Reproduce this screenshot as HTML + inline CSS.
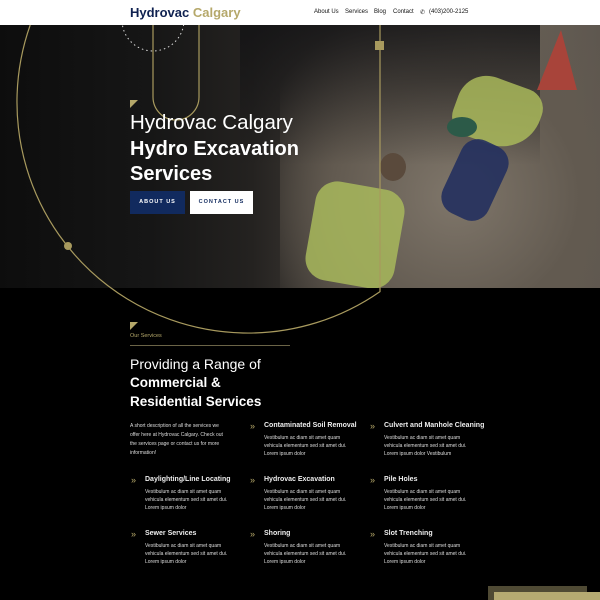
<!DOCTYPE html>
<html><head><meta charset="utf-8"><style>
*{margin:0;padding:0;box-sizing:border-box}
body{width:600px;height:600px;overflow:hidden;background:#000;font-family:"Liberation Sans",sans-serif;position:relative}
.nav{position:absolute;top:0;left:0;width:600px;height:25px;background:#fff;z-index:5}
.logo{position:absolute;left:130px;top:5px;font-size:13px;font-weight:bold;color:#0f2150}
.logo span{color:#b5a86a}
.menu{position:absolute;top:9px;font-size:6px;color:#111}
.hero{position:absolute;top:25px;left:0;width:600px;height:263px;overflow:hidden;
background:linear-gradient(90deg,#0d0d0d 0%,#161616 25%,#242220 42%,#4a443e 60%,#6a6258 80%,#5e574f 100%)}
.abs{position:absolute}
.t{color:#fff;position:absolute;left:130px;z-index:3}
.btn{position:absolute;height:23px;font-size:5.5px;font-weight:bold;letter-spacing:1px;text-align:center;line-height:23px;z-index:3}
.h{position:absolute;font-size:7px;font-weight:bold;color:#eee}
.p{position:absolute;font-size:5px;line-height:8px;color:#ddd;width:90px}
.ic{position:absolute;font-size:9px;color:#b5a86a;line-height:8px}
</style></head><body>
<div class="nav">
<div class="logo">Hydrovac <span>Calgary</span></div>
<div class="menu" style="left:314px">About Us</div>
<div class="menu" style="left:345px">Services</div>
<div class="menu" style="left:374px">Blog</div>
<div class="menu" style="left:393px">Contact</div>
<div class="menu" style="left:420px">&#9990;</div>
<div class="menu" style="left:429px">(403)200-2125</div>
</div>
<div class="hero">
<div class="abs" style="left:280px;top:0;width:320px;height:263px;background:radial-gradient(ellipse at 55% 65%,#7f766a 0%,#625a50 50%,rgba(50,46,42,0) 85%)"></div>
<div class="abs" style="left:240px;top:0;width:300px;height:140px;background:linear-gradient(180deg,rgba(18,18,20,.8),rgba(18,18,20,0))"></div>
<div class="abs" style="left:455px;top:55px;width:85px;height:65px;background:#a9b85a;border-radius:30px 20px 40px 20px;transform:rotate(20deg);opacity:.85"></div>
<div class="abs" style="left:447px;top:92px;width:30px;height:20px;background:#2c5a48;border-radius:50%"></div>
<div class="abs" style="left:450px;top:115px;width:50px;height:80px;background:#23305e;border-radius:18px;transform:rotate(25deg);opacity:.9"></div>
<div class="abs" style="left:310px;top:160px;width:90px;height:100px;background:#a8b85c;border-radius:22px;transform:rotate(10deg);opacity:.85"></div>
<div class="abs" style="left:380px;top:128px;width:26px;height:28px;background:#5a4a3c;border-radius:50%"></div>
<div class="abs" style="left:537px;top:5px;width:40px;height:60px;background:#a8443a;clip-path:polygon(60% 0,100% 100%,0 100%)"></div>
<div class="t" style="top:86px;font-size:20.5px;font-weight:300">Hydrovac Calgary</div>
<div class="t" style="top:112px;font-size:20px;font-weight:bold;line-height:25px">Hydro Excavation<br>Services</div>
<div class="btn" style="top:166px;left:130px;width:55px;background:#112a5e;color:#fff">ABOUT US</div>
<div class="btn" style="top:166px;left:190px;width:63px;background:#fff;color:#112a5e">CONTACT US</div>
</div>
<svg class="abs" style="left:0;top:25px;z-index:2" width="600" height="320">
<g fill="none" stroke="#a89a5e" stroke-width="1.2">
<path d="M380,0 V266.6 A231,231 0 0 1 30.2,0"/>
<path d="M153,0 V72 a23,23 0 0 0 46,0 V0"/>
<circle cx="153" cy="-5" r="31" stroke="#ddd" stroke-dasharray="1.5,3" stroke-width="1"/>
</g>
<circle cx="68" cy="221" r="4" fill="#a89a5e"/>
<rect x="375" y="16" width="9" height="9" fill="#a89a5e"/>
<polygon points="130,75 138,75 130,83" fill="#b5a86a"/>
</svg>
<svg class="abs" style="left:130px;top:322px" width="10" height="10"><polygon points="0,0 8,0 0,8" fill="#b5a86a"/></svg>
<div class="abs" style="left:130px;top:333px;font-size:5.5px;color:#b5a86a">Our Services</div>
<div class="abs" style="left:130px;top:345px;width:160px;height:1px;background:#6b6447"></div>
<div class="abs" style="left:130px;top:356px;font-size:14px;font-weight:300;color:#fff">Providing a Range of</div>
<div class="abs" style="left:130px;top:373px;font-size:13.5px;font-weight:bold;color:#fff;line-height:19px">Commercial &amp;<br>Residential Services</div>
<div class="p" style="left:130px;top:422px;width:100px;line-height:9px">A short description of all the services we offer here at Hydrovac Calgary. Check out the services page or contact us for more information!</div>

<div class="ic" style="left:250px;top:422px">&raquo;</div><div class="h" style="left:264px;top:422px">Contaminated Soil Removal</div><div class="p" style="left:264px;top:434px">Vestibulum ac diam sit amet quam vehicula elementum sed sit amet dui. Lorem ipsum dolor</div>
<div class="ic" style="left:370px;top:422px">&raquo;</div><div class="h" style="left:384px;top:422px">Culvert and Manhole Cleaning</div><div class="p" style="left:384px;top:434px">Vestibulum ac diam sit amet quam vehicula elementum sed sit amet dui. Lorem ipsum dolor Vestibulum</div>

<div class="ic" style="left:131px;top:476px">&raquo;</div><div class="h" style="left:145px;top:476px">Daylighting/Line Locating</div><div class="p" style="left:145px;top:488px">Vestibulum ac diam sit amet quam vehicula elementum sed sit amet dui. Lorem ipsum dolor</div>
<div class="ic" style="left:250px;top:476px">&raquo;</div><div class="h" style="left:264px;top:476px">Hydrovac Excavation</div><div class="p" style="left:264px;top:488px">Vestibulum ac diam sit amet quam vehicula elementum sed sit amet dui. Lorem ipsum dolor</div>
<div class="ic" style="left:370px;top:476px">&raquo;</div><div class="h" style="left:384px;top:476px">Pile Holes</div><div class="p" style="left:384px;top:488px">Vestibulum ac diam sit amet quam vehicula elementum sed sit amet dui. Lorem ipsum dolor</div>

<div class="ic" style="left:131px;top:530px">&raquo;</div><div class="h" style="left:145px;top:530px">Sewer Services</div><div class="p" style="left:145px;top:542px">Vestibulum ac diam sit amet quam vehicula elementum sed sit amet dui. Lorem ipsum dolor</div>
<div class="ic" style="left:250px;top:530px">&raquo;</div><div class="h" style="left:264px;top:530px">Shoring</div><div class="p" style="left:264px;top:542px">Vestibulum ac diam sit amet quam vehicula elementum sed sit amet dui. Lorem ipsum dolor</div>
<div class="ic" style="left:370px;top:530px">&raquo;</div><div class="h" style="left:384px;top:530px">Slot Trenching</div><div class="p" style="left:384px;top:542px">Vestibulum ac diam sit amet quam vehicula elementum sed sit amet dui. Lorem ipsum dolor</div>

<div class="abs" style="left:488px;top:586px;width:99px;height:14px;background:#4f4a34"></div>
<div class="abs" style="left:494px;top:592px;width:106px;height:8px;background:#b5aa72"></div>
</body></html>
